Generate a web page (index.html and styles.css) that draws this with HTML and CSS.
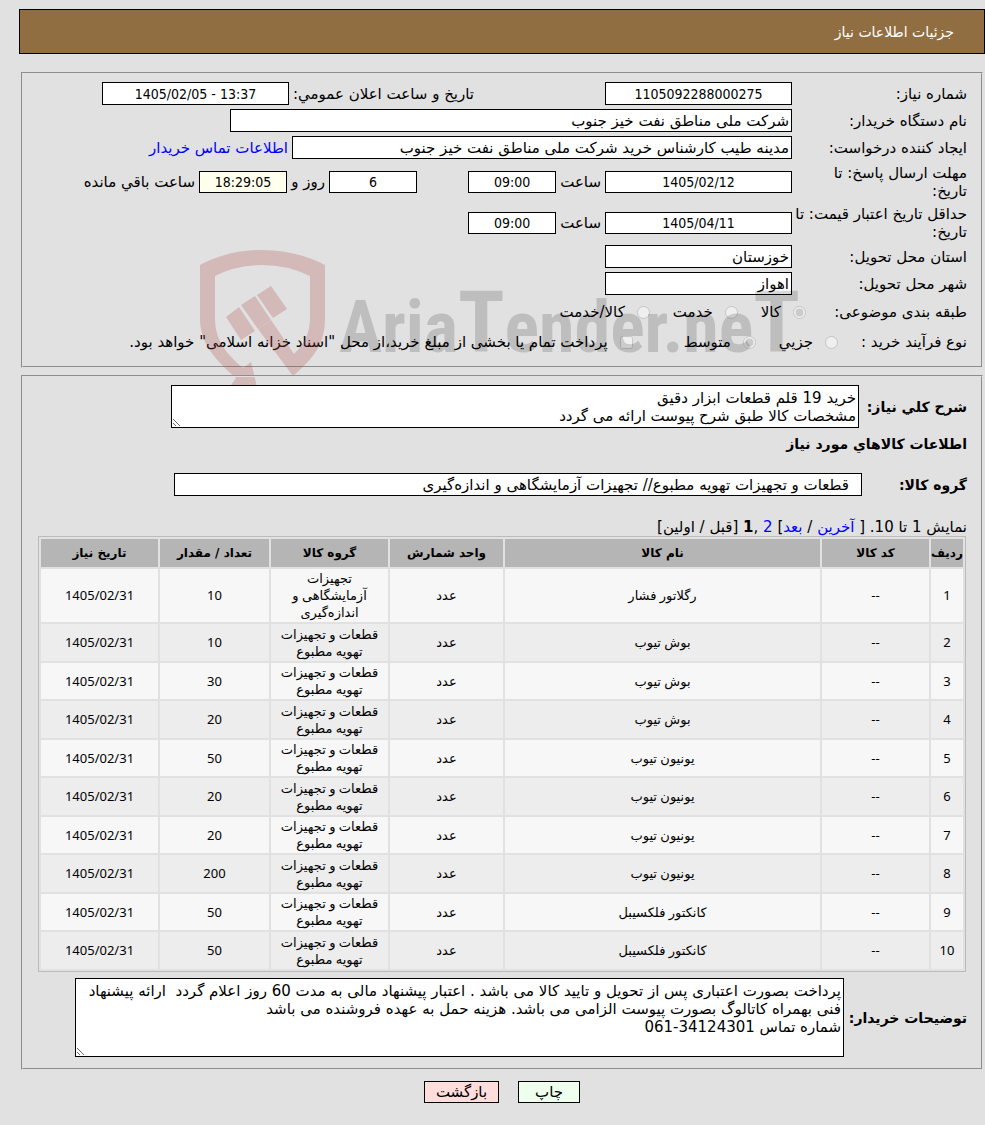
FILE: index.html
```
<!DOCTYPE html>
<html lang="fa" dir="rtl">
  <head>
    <meta charset="utf-8">
    <title>جزئیات اطلاعات نیاز</title>
    <link rel="stylesheet" href="styles.css">
  </head>
  <body>
    <div class="title">جزئیات اطلاعات نیاز</div>

    <form id="form">
      <fieldset class="box">
        <div class="row">
          <label class="lbl" for="needNo">شماره نیاز:</label>
          <div class="cell"><input class="txt date" type="text" id="needNo" value="1105092288000275" readonly></div>
          <label for="announce">تاریخ و ساعت اعلان عمومي:</label>
          <input class="txt date" type="text" id="announce" dir="ltr" value="1405/02/05 - 13:37" readonly>
        </div>
        <div class="row">
          <label class="lbl" for="buyer">نام دستگاه خریدار:</label>
          <input class="txt buyer" type="text" id="buyer" value="شرکت ملی مناطق نفت خیز جنوب" readonly>
        </div>
        <div class="row">
          <label class="lbl" for="creator">ایجاد کننده درخواست:</label>
          <input class="txt creator" type="text" id="creator" value="مدینه طیب کارشناس خرید شرکت ملی مناطق نفت خیز جنوب" readonly>
          <a href="#">اطلاعات تماس خریدار</a>
        </div>
        <div class="row tall">
          <label class="lbl" for="deadline">مهلت ارسال پاسخ: تا<br>تاریخ:</label>
          <div class="cell">
            <input class="txt date" type="text" id="deadline" value="1405/02/12" readonly>
            <label for="deadlineTime">ساعت</label>
            <input class="txt time" type="text" id="deadlineTime" value="09:00" readonly>
          </div>
          <div class="remain">
            <input class="txt time" type="text" id="days" value="6" readonly>
            <label class="days" for="days">روز و</label>
            <input class="txt time clock" type="text" id="clock" value="18:29:05" readonly>
            <label for="clock">ساعت باقي مانده</label>
          </div>
        </div>
        <div class="row tall">
          <label class="lbl" for="valid">حداقل تاریخ اعتبار قیمت: تا<br>تاریخ:</label>
          <div class="cell">
            <input class="txt date" type="text" id="valid" value="1405/04/11" readonly>
            <label for="validTime">ساعت</label>
            <input class="txt time" type="text" id="validTime" value="09:00" readonly>
          </div>
        </div>
        <div class="row">
          <label class="lbl" for="province">استان محل تحویل:</label>
          <input class="txt place" type="text" id="province" value="خوزستان" readonly>
        </div>
        <div class="row">
          <label class="lbl" for="city">شهر محل تحویل:</label>
          <input class="txt place" type="text" id="city" value="اهواز" readonly>
        </div>
        <div class="row opts">
          <span class="lbl subject">طبقه بندی موضوعی:</span>
          <label class="opt"><input type="radio" name="subject" checked disabled>کالا</label>
          <label class="opt"><input type="radio" name="subject" disabled>خدمت</label>
          <label class="opt"><input type="radio" name="subject" disabled>کالا/خدمت</label>
        </div>
        <div class="row opts">
          <span class="lbl process">نوع فرآیند خرید :</span>
          <label class="opt"><input type="radio" name="process" disabled>جزيي</label>
          <label class="opt"><input type="radio" name="process" checked disabled>متوسط</label>
          <label class="opt bonds"><input type="checkbox" name="bonds" disabled>پرداخت تمام یا بخشی از مبلغ خرید،از محل "اسناد خزانه اسلامی" خواهد بود.</label>
        </div>

        <svg class="watermark" width="610" height="140" viewBox="0 0 610 140" aria-hidden="true">
          <g class="shield">
            <path d="M0 15 Q28 0 62 0 T125 15 V68 C125 94 114 108 93 126 L58 79 L71 70 L94 104 C104 94 110 84 110 68 V26 Q88 15 62 15 T15 26 V68 C15 89 25 103 43 118 L51 112 L57 137 L31 135 L36 128 C13 108 0 92 0 68 Z"/>
            <path d="M26 67 L39 57 L55 81 L41 90 Z M41 55 L55 46 L71 70 L58 79 Z M57 45 L71 36 L87 59 L73 68 Z"/>
          </g>
          <text x="139" y="102">Aria<tspan class="big">T</tspan>ender.ne<tspan class="big">T</tspan></text>
        </svg>
      </fieldset>

      <fieldset class="box">
        <div class="row">
          <label class="bold summary-lbl" for="summary">شرح کلي نیاز:</label>
          <textarea class="summary" id="summary" readonly>خرید 19 قلم قطعات ابزار دقیق
مشخصات کالا طبق شرح پیوست ارائه می گردد</textarea>
        </div>
        <h2>اطلاعات کالاهاي مورد نیاز</h2>
        <div class="row">
          <label class="bold group-lbl" for="group">گروه کالا:</label>
          <input class="txt group" type="text" id="group" value="قطعات و تجهیزات تهویه مطبوع// تجهیزات آزمایشگاهی و اندازه‌گیری" readonly>
        </div>

        <div class="pager">نمایش 1 تا 10. [ <a href="#">آخرین</a> / <a href="#">بعد</a>] <a href="#">2</a> ,<b>1</b> [قبل / اولین]</div>
        <table class="items">
          <colgroup>
            <col class="c-row"><col class="c-code"><col class="c-name"><col class="c-unit"><col class="c-group"><col class="c-qty"><col class="c-date">
          </colgroup>
          <thead>
            <tr><th>ردیف</th><th>کد کالا</th><th>نام کالا</th><th>واحد شمارش</th><th>گروه کالا</th><th>تعداد / مقدار</th><th>تاریخ نیاز</th></tr>
          </thead>
          <tbody>
            <tr><td>1</td><td>--</td><td>رگلاتور فشار</td><td>عدد</td><td>تجهیزات<br>آزمایشگاهی و<br>اندازه‌گیری</td><td>10</td><td>1405/02/31</td></tr>
            <tr><td>2</td><td>--</td><td>بوش تیوب</td><td>عدد</td><td>قطعات و تجهیزات<br>تهویه مطبوع</td><td>10</td><td>1405/02/31</td></tr>
            <tr><td>3</td><td>--</td><td>بوش تیوب</td><td>عدد</td><td>قطعات و تجهیزات<br>تهویه مطبوع</td><td>30</td><td>1405/02/31</td></tr>
            <tr><td>4</td><td>--</td><td>بوش تیوب</td><td>عدد</td><td>قطعات و تجهیزات<br>تهویه مطبوع</td><td>20</td><td>1405/02/31</td></tr>
            <tr><td>5</td><td>--</td><td>یونیون تیوب</td><td>عدد</td><td>قطعات و تجهیزات<br>تهویه مطبوع</td><td>50</td><td>1405/02/31</td></tr>
            <tr><td>6</td><td>--</td><td>یونیون تیوب</td><td>عدد</td><td>قطعات و تجهیزات<br>تهویه مطبوع</td><td>20</td><td>1405/02/31</td></tr>
            <tr><td>7</td><td>--</td><td>یونیون تیوب</td><td>عدد</td><td>قطعات و تجهیزات<br>تهویه مطبوع</td><td>20</td><td>1405/02/31</td></tr>
            <tr><td>8</td><td>--</td><td>یونیون تیوب</td><td>عدد</td><td>قطعات و تجهیزات<br>تهویه مطبوع</td><td>200</td><td>1405/02/31</td></tr>
            <tr><td>9</td><td>--</td><td>کانکتور فلکسیبل</td><td>عدد</td><td>قطعات و تجهیزات<br>تهویه مطبوع</td><td>50</td><td>1405/02/31</td></tr>
            <tr><td>10</td><td>--</td><td>کانکتور فلکسیبل</td><td>عدد</td><td>قطعات و تجهیزات<br>تهویه مطبوع</td><td>50</td><td>1405/02/31</td></tr>
          </tbody>
        </table>

        <div class="row">
          <label class="bold notes-lbl" for="notes">توضیحات خریدار:</label>
          <textarea class="notes" id="notes" readonly>پرداخت بصورت اعتباری پس از تحویل و تایید کالا می باشد . اعتبار پیشنهاد مالی به مدت 60 روز اعلام گردد  ارائه پیشنهاد فنی بهمراه کاتالوگ بصورت پیوست الزامی می باشد. هزینه حمل به عهده فروشنده می باشد
شماره تماس 34124301-061</textarea>
        </div>
      </fieldset>

      <div class="buttons">
        <button type="button" class="print">چاپ</button>
        <button type="button" class="back">بازگشت</button>
      </div>
    </form>
  </body>
</html>
```
FILE: styles.css
```
* {
    box-sizing: border-box;
}

body {
    margin: 9px 0 0 19px;
    background: #e1e1e1;
    color: #000;
    font: 15px/18px Tahoma, "DejaVu Sans", sans-serif;
}

a {
    color: #00f;
    text-decoration: none;
}

.title {
    margin-bottom: 18px;
    padding: 13px 30px;
    height: 45px;
    border: 1px solid #000;
    background: #906e42;
    color: #fff;
    font-size: 14px;
}

/* کادرها */
.box {
    position: relative;
    min-width: 0;
    margin: 0 2px 7px;
    padding: 8px 14px 7px;
    border: 2px groove #e1e1e1;
}

.row {
    display: flex;
    align-items: center;
    gap: 4px;
    margin-bottom: 4px;
}

.tall {
    height: 37px;
}

.lbl {
    flex: none;
    width: 171px;
    white-space: nowrap;
}

.cell {
    display: flex;
    flex: none;
    align-items: center;
    gap: 4px;
    width: 314px;
}

.txt {
    flex: none;
    height: 23px;
    padding: 0 2px;
    border: 1px solid #000;
    background: #fff;
    color: #000;
    font: inherit;
}

.date,
.time {
    font-family: Tahoma, "DejaVu Sans Condensed", sans-serif;
    font-size: 14px;
    text-align: center;
}

.date {
    width: 187px;
}

.time {
    width: 88px;
    height: 22px;
}

.tall .date {
    height: 22px;
}

.buyer {
    width: 562px;
}

.creator {
    width: 500px;
}

.place {
    width: 187px;
}

.remain {
    display: flex;
    align-items: center;
    gap: 4px;
    padding-right: 57px;
}

.days {
    width: 34px;
}

.clock {
    background: #ffffee;
}

/* گزینه ها */
.opts {
    height: 26px;
    gap: 23px;
}

.opt {
    display: flex;
    align-items: center;
    gap: 12px;
    white-space: nowrap;
}

.opt input {
    margin: 0;
}

.subject {
    width: 138px;
}

.process {
    width: 106px;
}

.bonds {
    margin-right: 28px;
}

.watermark {
    position: absolute;
    top: 176px;
    left: 177px;
    overflow: visible;
    pointer-events: none;
}

.shield {
    fill: #b04444;
    opacity: 0.25;
}

.watermark text {
    fill: #000;
    opacity: 0.15;
    direction: ltr;
    font: bold 72px "Liberation Sans Narrow", "Roboto Condensed", "DejaVu Sans Condensed", sans-serif;
}

.watermark .big {
    font-size: 86px;
}

/* جزئیات کالا */
.bold {
    flex: none;
    font-size: 14px;
    font-weight: bold;
    white-space: nowrap;
}

textarea {
    display: block;
    padding: 3px 2px;
    border: 1px solid #000;
    background: #fff;
    color: #000;
    font: inherit;
}

.summary-lbl {
    width: 104px;
}

.summary {
    width: 688px;
    height: 43px;
}

h2 {
    margin: 7px 0 20px;
    font-size: 14px;
    line-height: 18px;
}

.group-lbl {
    width: 101px;
}

.group {
    width: 688px;
    padding-right: 12px;
}

.pager {
    margin-top: 22px;
}

.items {
    width: calc(100% - 2px);
    margin: 0 1px 6px;
    border: 1px solid #bbb;
    border-spacing: 2px;
    table-layout: fixed;
    font-size: 13px;
    line-height: 17px;
    text-align: center;
}

.items th {
    height: 28px;
    padding: 0;
    background: #b5b5b5;
    font-size: 12px;
}

.items td {
    padding: 1px;
    background: #f7f7f7;
    font-family: Tahoma, "Noto Sans", "DejaVu Sans", sans-serif;
}

.items tbody tr:nth-child(even) td {
    height: 37px;
    background: #ededed;
}

.c-row { width: 32px; }
.c-code { width: 107px; }
.c-unit { width: 113px; }
.c-group { width: 117px; }
.c-qty { width: 109px; }
.c-date { width: 117px; }

.notes-lbl {
    width: 119px;
}

.notes {
    width: 769px;
    height: 79px;
}

.buttons {
    display: flex;
    justify-content: center;
    gap: 19px;
    margin-top: 11px;
}

button {
    height: 22px;
    padding: 0;
    border: 1px solid #000;
    color: #000;
    font: inherit;
}

.print {
    width: 62px;
    background: #eeffee;
}

.back {
    width: 75px;
    background: #ffdddd;
}
```
